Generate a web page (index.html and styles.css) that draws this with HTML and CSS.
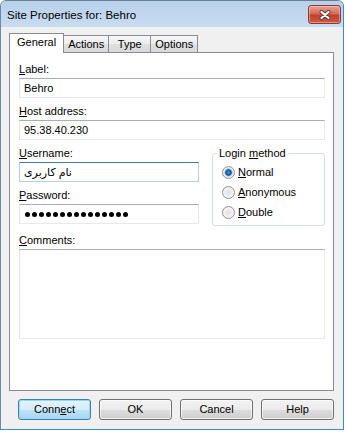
FILE: index.html
```html
<!DOCTYPE html>
<html lang="en">
<head>
  <meta charset="UTF-8" />
  <meta name="viewport" content="width=device-width, initial-scale=1.0" />
  <title>Site Properties for: Behro</title>
  <link rel="stylesheet" href="styles.css">
</head>
<body>
  <div class="window">
    <div class="titlebar">
      <span class="title">Site Properties for: Behro</span>
      <button class="close" aria-label="Close">
        <svg viewBox="0 0 14 10" width="14" height="10">
          <path d="M3.5 2 L10.5 8 M10.5 2 L3.5 8" stroke="#5a3a36" stroke-width="4" stroke-linecap="round" fill="none"/>
          <path d="M3.5 2 L10.5 8 M10.5 2 L3.5 8" stroke="#fff" stroke-width="2.2" stroke-linecap="round" fill="none"/>
        </svg>
      </button>
    </div>
    <div class="client">
      <div class="tabs">
        <div class="tab active">General</div>
        <div class="tab">Actions</div>
        <div class="tab">Type</div>
        <div class="tab">Options</div>
      </div>
      <div class="panel">
        <label class="field-label"><u>L</u>abel:</label>
        <div class="input">Behro</div>
        <label class="field-label"><u>H</u>ost address:</label>
        <div class="input">95.38.40.230</div>
        <div class="login-row">
          <div class="login-fields">
            <label class="field-label"><u>U</u>sername:</label>
            <div class="input focused">نام کاربری</div>
            <label class="field-label"><u>P</u>assword:</label>
            <div class="input password">
              <span class="dot"></span><span class="dot"></span><span class="dot"></span><span class="dot"></span><span class="dot"></span>
              <span class="dot"></span><span class="dot"></span><span class="dot"></span><span class="dot"></span><span class="dot"></span>
              <span class="dot"></span><span class="dot"></span><span class="dot"></span><span class="dot"></span><span class="dot"></span>
            </div>
          </div>
          <fieldset class="group">
            <legend>Login <u>m</u>ethod</legend>
            <div class="option"><span class="radio checked"></span><span><u>N</u>ormal</span></div>
            <div class="option"><span class="radio"></span><span><u>A</u>nonymous</span></div>
            <div class="option"><span class="radio"></span><span><u>D</u>ouble</span></div>
          </fieldset>
        </div>
        <label class="field-label comments-label"><u>C</u>omments:</label>
        <div class="input textarea"></div>
      </div>
      <div class="buttons">
        <button class="btn default">Conn<u>e</u>ct</button>
        <button class="btn">OK</button>
        <button class="btn">Cancel</button>
        <button class="btn">Help</button>
      </div>
    </div>
  </div>
</body>
</html>
```

FILE: styles.css
```css
* { box-sizing: border-box; }
body {
  margin: 0;
  background: #fff;
  font-family: "Liberation Sans", "DejaVu Sans", sans-serif;
  font-size: 11px;
  color: #000;
}
.window {
  width: 344px;
  height: 430px;
  display: flex;
  flex-direction: column;
  border: 1px solid #3a8ad0;
  border-top-color: #6b7f93;
  border-left-color: #6d8aa8;
  border-radius: 6px 6px 0 0;
  background: #f0f0f0;
  overflow: hidden;
}
.titlebar {
  height: 26px;
  display: flex;
  align-items: flex-start;
  background: linear-gradient(#b8d0ea, #c8dcf1);
}
.title {
  font-size: 11.5px;
  line-height: 16px;
  margin: 6px 0 0 6px;
}
.close {
  margin: 4px 2px 0 auto;
  width: 33px;
  height: 19px;
  padding: 0;
  border: 1px solid #8a3a30;
  border-radius: 3px;
  background: linear-gradient(#e8a397, #d46a58 45%, #c2402b 55%, #cf5a44);
  box-shadow: inset 0 0 0 1px rgba(255, 220, 210, 0.45);
  display: flex;
  align-items: center;
  justify-content: center;
}
.close svg { display: block; }
.client {
  flex: 1;
  padding: 6px 0 0 8px;
}
.tabs {
  display: flex;
  align-items: flex-end;
  height: 19px;
}
.tab {
  height: 17px;
  min-width: 43px;
  padding: 2px 4px 0;
  margin-left: -1px;
  line-height: 13px;
  text-align: center;
  border: 1px solid #898c95;
  border-bottom: none;
  background: linear-gradient(#f7f7f7, #ececec 50%, #e0e0e0 51%, #d9d9d9);
}
.tab:first-child { margin-left: 0; }
.tab.active {
  height: 20px;
  margin-bottom: -1px;
  padding: 2px 7px 0;
  background: #fff;
  position: relative;
  z-index: 1;
}
.panel {
  width: 325px;
  height: 339px;
  border: 1px solid #898c95;
  background: #fff;
  padding: 10px 8px 0 9px;
}
.field-label {
  display: block;
  line-height: 13px;
  margin-bottom: 2px;
}
.input {
  height: 20px;
  line-height: 18px;
  padding: 0 4px;
  margin-bottom: 7px;
  border: 1px solid #e3e9ef;
  border-top-color: #abadb3;
  border-left-color: #e2e3ea;
  background: #fff;
}
.input.focused {
  border-color: #b5cfe7;
  border-top-color: #3d7bad;
}
.password {
  display: flex;
  align-items: center;
  gap: 2px;
  padding-left: 5px;
}
.dot {
  width: 5px;
  height: 5px;
  border-radius: 50%;
  background: #000;
}
.login-row {
  display: flex;
  gap: 13px;
}
.login-fields { width: 180px; }
.login-fields .input:last-child { margin-bottom: 0; }
.group {
  width: 113px;
  margin: 0;
  padding: 2px 0 3px 9px;
  border: 1px solid #d5dfe5;
  border-radius: 3px;
}
.group legend {
  line-height: 13px;
  padding: 0 2px;
  margin-left: -5px;
}
.option {
  height: 20px;
  display: flex;
  align-items: center;
  gap: 3px;
}
.radio {
  width: 13px;
  height: 13px;
  border-radius: 50%;
  border: 1px solid #8f9090;
  background: radial-gradient(circle, #e2e2e2 0, #ececec 3px, #f7f7f7 6px);
}
.radio.checked {
  background: radial-gradient(circle, #4a9be0 0, #1c5a96 2.2px, #2a6ba8 3px, #8cc3ee 3.6px, #e8e8e8 4.4px, #f7f7f7 6px);
}
.comments-label { margin-top: 8px; }
.textarea { height: 90px; }
.buttons {
  width: 325px;
  display: flex;
  justify-content: flex-end;
  gap: 8px;
  margin-top: 8px;
}
.btn {
  width: 73px;
  height: 21px;
  padding: 0;
  font: inherit;
  color: #000;
  line-height: 19px;
  border: 1px solid #707070;
  border-radius: 3px;
  background: linear-gradient(#f2f2f2, #ebebeb 50%, #dddddd 51%, #cfcfcf);
  box-shadow: inset 0 0 0 1px rgba(255, 255, 255, 0.7);
}
.btn.default {
  border-color: #3c7fb1;
  background: linear-gradient(#e5f4fc, #d5edfa 50%, #bfe3f7 51%, #aad6f1);
  box-shadow: inset 0 0 0 1px #97d9f5;
}
```
